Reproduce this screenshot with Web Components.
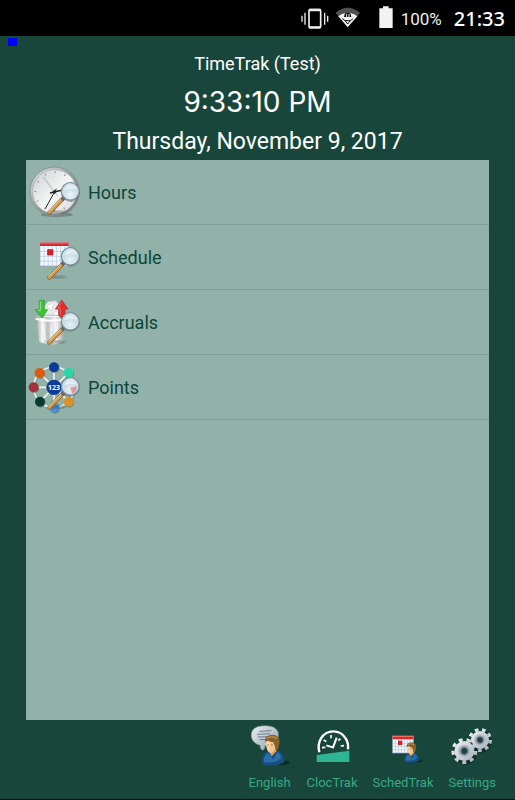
<!DOCTYPE html>
<html lang="en">
<head>
<meta charset="utf-8">
<meta name="viewport" content="width=device-width, initial-scale=1">
<title>TimeTrak</title>
<style>
    :root {
        --bg: #18463a;
        --panel: #92b1a9;
        --line: #809f96;
        --ink: #0b4738;
        --accent: #38a887;
    }
    body {
        margin: 0;
        background: var(--bg);
        font-family: Roboto, "Liberation Sans", sans-serif;
    }
</style>
</head>
<body>
<trak-app>
    <trak-status slot="status" battery="100%" time="21:33"></trak-status>
    <trak-header slot="header" name="TimeTrak (Test)" time="9:33:10 PM" date="Thursday, November 9, 2017"></trak-header>
    <trak-row icon="hours">Hours</trak-row>
    <trak-row icon="schedule">Schedule</trak-row>
    <trak-row icon="accruals">Accruals</trak-row>
    <trak-row icon="points">Points</trak-row>
    <trak-tab slot="tabs" icon="english">English</trak-tab>
    <trak-tab slot="tabs" icon="cloctrak">ClocTrak</trak-tab>
    <trak-tab slot="tabs" icon="schedtrak">SchedTrak</trak-tab>
    <trak-tab slot="tabs" icon="settings">Settings</trak-tab>
</trak-app>

<script>
// Magnifying glass shared by all the list icons
const glass = `
    <defs>
        <radialGradient id="lens" cx=".5" cy=".7" r=".7">
            <stop offset="0" stop-color="#eff9fc" stop-opacity=".95"/>
            <stop offset="1" stop-color="#b4d3e2" stop-opacity=".85"/>
        </radialGradient>
        <filter id="soft"><feGaussianBlur stdDeviation="3"/></filter>
    </defs>
    <ellipse cx="98" cy="156" rx="28" ry="5" fill="#3d5a50" opacity=".45" filter="url(#soft)"/>
    <path d="M119 114L76 158" stroke="#7d5c30" stroke-width="12" stroke-linecap="round"/>
    <path d="M112 121L76 157" stroke="#cf9a4c" stroke-width="9" stroke-linecap="round"/>
    <path d="M111 118L74 155" stroke="#f4d79c" stroke-width="3"/>
    <path d="M121 112L113 120" stroke="#666c70" stroke-width="8"/>
    <circle cx="139" cy="96" r="29" fill="#4c6768" opacity=".5"/>
    <circle cx="139" cy="94" r="26" fill="url(#lens)" stroke="#7e929e" stroke-width="4"/>
    <circle cx="139" cy="94" r="23" fill="none" stroke="#eef5f7" stroke-width="2"/>
    <path d="M120 91Q124 74 141 73Q154 75 159 89Q137 83 120 91Z" fill="#fff" opacity=".55"/>`;

const calendar = (x, y, w, h) => `
    <rect x="${x}" y="${y}" width="${w}" height="${h}" fill="#f5f8fc"/>
    <path stroke="#b3c6e2" stroke-width="2" d="${[1, 2, 3, 4, 5, 6].map(i => `M${x + w * i / 7} ${y + 12}V${y + h}`).join('')}${[1, 2, 3].map(i => `M${x} ${y + 12 + (h - 12) * i / 4}H${x + w}`).join('')}"/>
    <rect x="${x}" y="${y}" width="${w}" height="${h}" fill="none" stroke="#8fa8cb" stroke-width="2"/>
    <rect x="${x}" y="${y}" width="${w}" height="10" fill="#d92b2b"/>
    <rect x="${x}" y="${y}" width="${w}" height="3" fill="#f06b62"/>`;

const person = `
    <ellipse cx="112" cy="143" rx="34" ry="8" fill="#081e1b" opacity=".7"/>
    <path d="M62 145Q62 116 80 109L106 105Q129 112 131 140Q114 153 91 152Q72 152 62 145Z" fill="#174f80"/>
    <path d="M68 142Q67 121 82 113L97 134L108 111Q117 114 121 128Q106 146 68 142Z" fill="#2a6fa8"/>
    <path d="M82 106L92 124L107 108L104 98Z" fill="#d99f66"/>
    <path d="M74 78Q80 68 98 72Q106 82 103 100Q99 112 90 114Q80 112 77 100Z" fill="#f0c48d"/>
    <path d="M76 80Q79 76 88 78L84 110Q77 106 76 80Z" fill="#f8d9ac"/>
    <path d="M73 82Q69 67 81 62Q95 56 106 62Q119 70 115 88Q114 101 106 107Q101 100 101 90Q97 89 97 81Q86 82 82 77Q76 77 73 82Z" fill="#87602c"/>
    <path d="M78 70Q92 60 108 71" fill="none" stroke="#b58a4c" stroke-width="5"/>
    <path d="M79 90h5m6 0h5" stroke="#6e4a26" stroke-width="2"/>`;

const gear = (x, y, r) => `
    <circle cx="${x + 3}" cy="${y + 5}" r="${r - 2}" fill="#0b251f" opacity=".6"/>
    <circle cx="${x}" cy="${y}" r="${r - 4}" fill="none" stroke="url(#steel)" stroke-width="10" pathLength="18" stroke-dasharray="1 1"/>
    <circle cx="${x}" cy="${y}" r="${r - 8}" fill="url(#steel)"/>
    <circle cx="${x}" cy="${y}" r="${r * 0.45}" fill="#9aa5b2" stroke="#b4bdc9" stroke-width="4"/>
    <circle cx="${x}" cy="${y}" r="${r * 0.27}" fill="#1d433c" stroke="#6b7783" stroke-width="3"/>`;

const nodes = [
    [90, 37, '#0b3a9b'], [134, 53, '#2bd7a6'], [134, 140, '#d89227'],
    [91, 158, '#438de0'], [48, 140, '#053e31'], [29, 97, '#a13439'], [47, 54, '#e05a0b']
];

const icons = {
    hours: ['6 0 174 192', `
        <defs>
            <linearGradient id="rim" x2="1" y2="1"><stop stop-color="#e4e6e7"/><stop offset=".5" stop-color="#999e9f"/><stop offset="1" stop-color="#6e7576"/></linearGradient>
            <linearGradient id="dial" x2="1" y2="1"><stop stop-color="#cbd0d2"/><stop offset=".55" stop-color="#f5f6f6"/><stop offset="1" stop-color="#d5d8da"/></linearGradient>
        </defs>
        <ellipse cx="98" cy="164" rx="48" ry="7" fill="#52665f" opacity=".5"/>
        <circle cx="92" cy="95" r="74" fill="url(#rim)" stroke="#7c8586" stroke-width="2"/>
        <circle cx="92" cy="95" r="66" fill="url(#dial)" stroke="#a9afb1" stroke-width="2"/>
        <circle cx="92" cy="95" r="58" fill="none" stroke="#8d9498" stroke-width="6" pathLength="120" stroke-dasharray="1 9" stroke-dashoffset=".5"/>
        <path d="M100 107L58 51" stroke="#92979b" stroke-width="2"/>
        <path d="M97 86L64 146" stroke="#222" stroke-width="3"/>
        <path d="M78 99L116 90" stroke="#222" stroke-width="4"/>
        <circle cx="91" cy="96" r="5" fill="#222"/>${glass}`],
    schedule: ['6 0 174 192', `${calendar(48, 53, 86, 70)}<rect x="71" y="74" width="16" height="16" fill="#d61e23" stroke="#8b2930" stroke-width="2"/>${glass}`],
    accruals: ['6 0 174 192', `
        <defs>
            <linearGradient id="bin"><stop stop-color="#969a9b"/><stop offset=".22" stop-color="#f8f8f8"/><stop offset=".4" stop-color="#babebf"/><stop offset=".65" stop-color="#f4f4f4"/><stop offset="1" stop-color="#929899"/></linearGradient>
        </defs>
        <path d="M60 82V50L72 35L95 32L111 50L106 88Z" fill="#e8ecec" stroke="#bac1c1" stroke-width="2"/>
        <path d="M66 48L92 36L83 62ZM82 82L96 60L112 83Z" fill="#fff" stroke="#c8cdcd" stroke-width="2"/>
        <path d="M35 83H125L119 155Q82 171 46 156Z" fill="url(#bin)"/>
        <path d="M35 86Q80 98 125 86" fill="none" stroke="#fff" stroke-width="6"/>
        <path d="M35 82Q80 68 125 82" fill="none" stroke="#b9bebe" stroke-width="3"/>
        <path d="M58 100L64 152M81 102V156M101 101L97 151" stroke="#fff" stroke-width="4" opacity=".7"/>
        <path d="M46 31H61V59H71L54 84L34 59H46Z" fill="#3bc438" stroke="#2b9c30" stroke-width="2"/>
        <path d="M49 34V61H42" fill="none" stroke="#8aee75" stroke-width="3"/>
        <path d="M113 30L132 57H123V86Q109 86 104 76V57H94Z" fill="#dc3030" stroke="#b7262c" stroke-width="2"/>
        <path d="M112 36L101 54H109V74" fill="none" stroke="#f4675e" stroke-width="3"/>${glass}`],
    points: ['6 0 174 192', `
        <circle cx="92" cy="99" r="62" fill="none" stroke="#617e75" stroke-width="6" opacity=".4"/>
        <circle cx="90" cy="97" r="61" fill="none" stroke="#f3f3f0" stroke-width="5"/>
        <path d="${nodes.map(n => `M90 97L${n[0]} ${n[1]}`).join('')}" stroke="#f3f3f0" stroke-width="5"/>
        ${nodes.map(n => `<circle cx="${n[0] + 2}" cy="${n[1] + 3}" r="15" fill="#4f6c62" opacity=".5"/><circle cx="${n[0]}" cy="${n[1]}" r="15" fill="${n[2]}"/>`).join('')}
        <circle cx="90" cy="97" r="23" fill="#103d9c"/>
        <text x="90" y="104" text-anchor="middle" font-family="Open Sans, sans-serif" font-size="21" font-weight="700" fill="#fff">123</text>
        ${glass}<path d="M138 98L158 94Q160 111 145 116Z" fill="#e95363" opacity=".55"/>`],
    english: ['21 30 132 144', `
        <defs><linearGradient id="bubble" x2="1" y2="1"><stop stop-color="#ebf0f3"/><stop offset="1" stop-color="#8d9eaa"/></linearGradient></defs>
        <path d="M58 91Q32 84 31 61Q31 36 62 33Q101 29 111 51Q118 88 72 92Q73 100 66 106Q56 102 58 91Z" fill="url(#bubble)" stroke="#94a5ae" stroke-width="2"/>
        <path d="M55 49L91 47M48 58L87 56M50 66L81 65M55 74L76 73" stroke="#6b7d8a" stroke-width="3"/>${person}`],
    cloctrak: ['205 30 132 144', `
        <path d="M233 112Q227 88 238 70Q251 49 275 49Q299 49 312 70Q321 84 319 103" fill="none" stroke="#fff" stroke-width="7"/>
        <path d="M273 100L285 68M254 91L273 97" fill="none" stroke="#fff" stroke-width="6"/>
        <path d="M268 60v10M246 75l8 5M241 98l10-1M296 71l-6 6M307 92l-10 1" stroke="#fff" stroke-width="5"/>
        <path d="M225 120L323 107V141H225Z" fill="#2fb591"/>`],
    schedtrak: ['44 30 132 144', `${calendar(79, 63, 62, 51)}
        <rect x="95" y="77" width="13" height="13" fill="#d61e23"/>
        <g transform="translate(73 43) scale(.66)">${person}</g>`],
    settings: ['255 30 132 144', `
        <defs><linearGradient id="steel" x2="1" y2="1"><stop stop-color="#eef1f5"/><stop offset=".55" stop-color="#c8cfd8"/><stop offset="1" stop-color="#a3adb9"/></linearGradient></defs>
        ${gear(345, 75, 35)}${gear(298, 108, 38)}`]
};

class TrakIcon extends HTMLElement {
    constructor() {
        super();
        this.attachShadow({ mode: 'open' });
    }

    connectedCallback() {
        const [box, art] = icons[this.getAttribute('name')];
        this.shadowRoot.innerHTML = `
            <style>
                :host { display: block; }
                svg { display: block; width: 100%; height: 100%; overflow: visible; }
            </style>
            <svg viewBox="${box}" fill="none" aria-hidden="true">${art}</svg>
        `;
    }
}

class TrakStatus extends HTMLElement {
    constructor() {
        super();
        this.attachShadow({ mode: 'open' });
    }

    connectedCallback() {
        this.shadowRoot.innerHTML = `
            <style>
                :host {
                    display: flex;
                    align-items: center;
                    justify-content: flex-end;
                    height: 36px;
                    padding-right: 10px;
                    background: #000;
                    color: #eee;
                }
                svg { display: block; height: 36px; }
                .vibrate { width: 28px; margin-right: 6px; }
                .wifi { width: 26px; margin-right: 18px; }
                .battery { width: 14px; margin-right: 8px; }
                .level { font-size: 17px; margin-right: 12px; padding-top: 2px; }
                .time { font: 500 20px "Noto Sans", "Open Sans", sans-serif; color: #fff; }
            </style>
            <svg class="vibrate" viewBox="30 0 84 108" aria-hidden="true">
                <rect x="54" y="29" width="35" height="54" rx="4" fill="none" stroke="#eee" stroke-width="5"/>
                <path d="M54 30H89M54 82H89" stroke="#eee" stroke-width="7"/>
                <path d="M42 38V74M33 47V65M101 38V74M110 47V65" stroke="#eee" stroke-width="4"/>
            </svg>
            <svg class="wifi" viewBox="135 0 78 108" aria-hidden="true">
                <path d="M137 38Q173 9 210 38L201 50Q173 29 146 50Z" fill="#505050"/>
                <path d="M145 49Q154 41 165 39L162 51H184L181 39Q193 41 202 49L173 82Z" fill="#f2f2f2"/>
                <path d="M157 56L165 62H181L189 56M165 62L173 72L181 62" fill="none" stroke="#111" stroke-width="3"/>
                <path d="M170 42V51M177 42V51" stroke="#f2f2f2" stroke-width="3"/>
            </svg>
            <svg class="battery" viewBox="265 0 42 108" aria-hidden="true">
                <path d="M266 25H277V19H294V25H306V84H266Z" fill="#f2f2f2"/>
            </svg>
            <span class="level">${this.getAttribute('battery')}</span>
            <span class="time">${this.getAttribute('time')}</span>
        `;
    }
}

class TrakHeader extends HTMLElement {
    constructor() {
        super();
        this.attachShadow({ mode: 'open' });
    }

    connectedCallback() {
        this.shadowRoot.innerHTML = `
            <style>
                :host {
                    display: block;
                    position: relative;
                    padding-top: 12px;
                    color: #fff;
                    text-align: center;
                }
                .marker {
                    position: absolute;
                    top: 2px;
                    left: 8px;
                    width: 9px;
                    height: 8px;
                    background: #00f;
                }
                h1, p { margin: 0; font-weight: 400; }
                h1 { font-size: 18px; line-height: 32px; }
                .time { font: 28px/44px Inter, Roboto, sans-serif; }
                .date { font-size: 23px; line-height: 36px; }
            </style>
            <span class="marker"></span>
            <h1>${this.getAttribute('name')}</h1>
            <p class="time">${this.getAttribute('time')}</p>
            <p class="date">${this.getAttribute('date')}</p>
        `;
    }
}

class TrakRow extends HTMLElement {
    constructor() {
        super();
        this.attachShadow({ mode: 'open' });
    }

    connectedCallback() {
        this.shadowRoot.innerHTML = `
            <style>
                :host { display: block; border-bottom: 1px solid var(--line); }
                button {
                    display: flex;
                    align-items: center;
                    gap: 4px;
                    width: 100%;
                    padding: 0;
                    border: 0;
                    background: none;
                    color: var(--ink);
                    font: inherit;
                    font-size: 18px;
                    text-align: left;
                    cursor: pointer;
                }
                trak-icon { width: 58px; height: 64px; }
            </style>
            <button type="button">
                <trak-icon name="${this.getAttribute('icon')}"></trak-icon>
                <span><slot></slot></span>
            </button>
        `;
    }
}

class TrakTab extends HTMLElement {
    constructor() {
        super();
        this.attachShadow({ mode: 'open' });
    }

    connectedCallback() {
        this.shadowRoot.innerHTML = `
            <style>
                :host { display: block; }
                button {
                    display: flex;
                    flex-direction: column;
                    align-items: center;
                    padding: 0;
                    border: 0;
                    background: none;
                    color: var(--accent);
                    font: inherit;
                    font-size: 13px;
                    line-height: 20px;
                    cursor: pointer;
                }
                trak-icon { width: 44px; height: 48px; }
            </style>
            <button type="button">
                <trak-icon name="${this.getAttribute('icon')}"></trak-icon>
                <span><slot></slot></span>
            </button>
        `;
    }
}

class TrakApp extends HTMLElement {
    constructor() {
        super();
        this.attachShadow({ mode: 'open' });
        this.shadowRoot.innerHTML = `
            <style>
                :host {
                    display: flex;
                    flex-direction: column;
                    box-sizing: border-box;
                    min-height: 100vh;
                    border-bottom: 1px solid #06110e;
                }
                main {
                    flex: 1;
                    margin: 0 26px;
                    background: var(--panel);
                }
                nav {
                    display: flex;
                    justify-content: flex-end;
                    gap: 15px;
                    padding: 5px 19px 6px;
                }
            </style>
            <slot name="status"></slot>
            <slot name="header"></slot>
            <main><slot></slot></main>
            <nav><slot name="tabs"></slot></nav>
        `;
    }
}

customElements.define('trak-icon', TrakIcon);
customElements.define('trak-status', TrakStatus);
customElements.define('trak-header', TrakHeader);
customElements.define('trak-row', TrakRow);
customElements.define('trak-tab', TrakTab);
customElements.define('trak-app', TrakApp);
</script>
</body>
</html>
